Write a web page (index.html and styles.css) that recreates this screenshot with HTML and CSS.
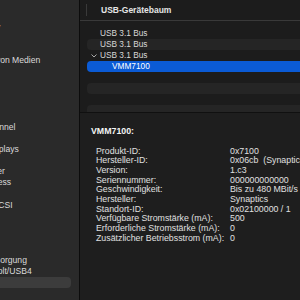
FILE: index.html
```html
<!DOCTYPE html>
<html lang="de">
<head>
    <meta charset="UTF-8">
    <meta name="viewport" content="width=device-width, initial-scale=1.0">
    <link rel="stylesheet" href="styles.css">
</head>
<body>
    <div class="window">
        <!-- Sidebar (only its right part is in view) -->
        <div class="sidebar">
            <ul class="side-list">
                <li>ATA</li>
                <li>Apple Pay</li>
                <li>Audio</li>
                <li>Bluetooth</li>
                <li>Brennen von Medien</li>
                <li>Controller</li>
                <li>Diagnose</li>
                <li>Drucker</li>
                <li>Ethernet</li>
                <li>Festplatte</li>
                <li>Fibre-Channel</li>
                <li>FireWire</li>
                <li>Grafik/Displays</li>
                <li>Kamera</li>
                <li>Kartenleser</li>
                <li>NVMExpress</li>
                <li>Netzwerk</li>
                <li>Parallel-SCSI</li>
                <li>PCI</li>
                <li>SAS</li>
                <li>SATA</li>
                <li>Speicher</li>
                <li>Stromversorgung</li>
                <li>Thunderbolt/USB4</li>
                <li class="active">USB</li>
            </ul>
        </div>

        <div class="main">
            <div class="toolbar">
                <span class="toolbar-sep"></span>
                <span class="toolbar-title">USB-Gerätebaum</span>
            </div>

            <div class="tree">
                <div class="tree-row">USB 3.1 Bus</div>
                <div class="tree-row alt">USB 3.1 Bus</div>
                <div class="tree-row">
                    <svg class="chevron" width="6" height="4" viewBox="0 0 6 4">
                        <polyline points="0.5,0.5 3,3 5.5,0.5" fill="none" stroke="#a8a8a8" stroke-width="1"/>
                    </svg>
                    USB 3.1 Bus
                </div>
                <div class="tree-row selected child">VMM7100</div>
                <div class="tree-row"></div>
                <div class="tree-row alt"></div>
                <div class="tree-row"></div>
                <div class="tree-row alt"></div>
            </div>

            <div class="details">
                <div class="details-title">VMM7100:</div>
                <div class="props">
                    <span>Produkt-ID:</span><span>0x7100</span>
                    <span>Hersteller-ID:</span><span>0x06cb&nbsp;&nbsp;(Synaptics Inc.)</span>
                    <span>Version:</span><span>1.c3</span>
                    <span>Seriennummer:</span><span>000000000000</span>
                    <span>Geschwindigkeit:</span><span>Bis zu 480 MBit/s</span>
                    <span>Hersteller:</span><span>Synaptics</span>
                    <span>Standort-ID:</span><span>0x02100000 / 1</span>
                    <span>Verfügbare Stromstärke (mA):</span><span>500</span>
                    <span>Erforderliche Stromstärke (mA):</span><span>0</span>
                    <span>Zusätzlicher Betriebsstrom (mA):</span><span>0</span>
                </div>
            </div>
        </div>
    </div>
</body>
</html>
```

FILE: styles.css
```css
html, body {
    margin: 0;
    width: 300px;
    height: 300px;
    overflow: hidden;
    background: #1e1e1e;
}

body {
    font-family: "Liberation Sans", Arial, sans-serif;
    color: #e0e0e0;
}

/* window is wider than the view, we only see a crop of it */
.window {
    display: flex;
    width: 460px;
    height: 300px;
    margin-left: -50px;
}

.sidebar {
    width: 129px;
    flex-shrink: 0;
    background: #2a2a2a;
    border-right: 1px solid #0c0c0c;
    overflow: hidden;
}

.side-list {
    list-style: none;
    margin: 0;
    padding: 11px 8px 0 0;
    font-size: 8.6px;
    color: #dadada;
}

.side-list li {
    height: 11.1px;
    line-height: 11.1px;
    padding-left: 11px;
    white-space: nowrap;
    border-radius: 0 4px 4px 0;
}

.side-list li.active {
    background: #3c3c3c;
}

.main {
    flex: 1;
    display: flex;
    flex-direction: column;
    background: #1e1e1e;
}

.toolbar {
    height: 20px;
    display: flex;
    align-items: center;
    background: #1c1c1c;
    border-bottom: 1px solid #393939;
}

.toolbar-sep {
    width: 1px;
    height: 12px;
    margin-left: 6px;
    background: #3a3a3a;
}

.toolbar-title {
    margin-left: 14px;
    font-size: 8.5px;
    font-weight: bold;
    color: #e6e6e6;
}

.tree {
    height: 92px;
    padding-top: 7px;
    box-sizing: border-box;
    overflow: hidden;
    background: #1c1c1c;
    border-bottom: 1px solid #101010;
    font-size: 8.3px;
    color: #d8d8d8;
}

.tree-row {
    position: relative;
    height: 11px;
    line-height: 11px;
    margin-left: 7px;
    padding-left: 13px;
    border-radius: 4px 0 0 4px;
    white-space: nowrap;
}

.tree-row.alt {
    background: #252525;
}

.tree-row.selected {
    background: #0b5bd5;
    color: #ffffff;
}

.tree-row.child {
    padding-left: 25px;
}

.chevron {
    position: absolute;
    left: 4px;
    top: 4px;
}

.details {
    flex: 1;
    padding: 13px 0 0 11px;
    font-size: 8.8px;
}

.details-title {
    line-height: 10px;
    font-weight: bold;
    color: #f4f4f4;
    margin-bottom: 10.5px;
}

.props {
    display: grid;
    grid-template-columns: 134px auto;
    padding-left: 5px;
    line-height: 9.67px;
    white-space: nowrap;
}
```
